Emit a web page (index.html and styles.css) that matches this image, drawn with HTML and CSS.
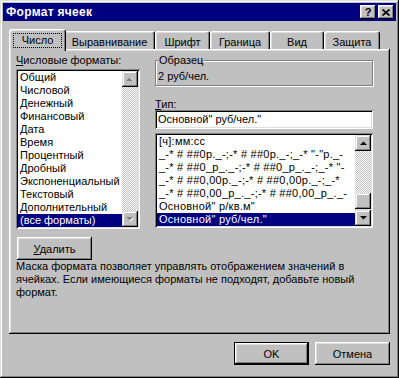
FILE: index.html
```html
<!DOCTYPE html>
<html lang="ru">
<head>
    <meta charset="UTF-8">
    <title>Формат ячеек</title>
    <link rel="stylesheet" href="styles.css">
</head>
<body>

    <div class="window">
        <div class="caption">
            <span class="caption-title">Формат ячеек</span>
            <div class="caption-btns">
                <span class="cap-btn help">?</span>
                <span class="cap-btn close">
                    <svg width="8" height="7" viewBox="0 0 8 7"><path d="M0.5 0.5 L7.5 6.5 M7.5 0.5 L0.5 6.5" stroke="#000" stroke-width="1.6"/></svg>
                </span>
            </div>
        </div>

        <div class="dialog">
            <div class="tabs">
                <div class="tab active w-num"><span class="focus">Число</span></div>
                <div class="tab w-align">Выравнивание</div>
                <div class="tab w-font">Шрифт</div>
                <div class="tab w-border">Граница</div>
                <div class="tab w-view">Вид</div>
                <div class="tab w-prot">Защита</div>
            </div>

            <div class="panel">
                <div class="cols">
                    <div class="col-left">
                        <div class="label"><u>Ч</u>исловые форматы:</div>
                        <div class="listbox cats">
                            <ul class="items">
                                <li>Общий</li>
                                <li>Числовой</li>
                                <li>Денежный</li>
                                <li>Финансовый</li>
                                <li>Дата</li>
                                <li>Время</li>
                                <li>Процентный</li>
                                <li>Дробный</li>
                                <li>Экспоненциальный</li>
                                <li>Текстовый</li>
                                <li>Дополнительный</li>
                                <li class="selected">(все форматы)</li>
                            </ul>
                            <div class="scrollbar">
                                <span class="sb-btn">
                                    <svg width="8" height="5" viewBox="0 0 8 5"><polygon points="1,4 8,4 4.5,0.5" fill="#fff"/><polygon points="0,4 7,4 3.5,0.5" fill="#808080"/></svg>
                                </span>
                                <span class="sb-track"></span>
                                <span class="sb-btn">
                                    <svg width="8" height="5" viewBox="0 0 8 5"><polygon points="1,1 8,1 4.5,4.5" fill="#fff"/><polygon points="0,0 7,0 3.5,3.5" fill="#808080"/></svg>
                                </span>
                            </div>
                        </div>
                        <button class="btn btn-delete"><u>У</u>далить</button>
                    </div>

                    <div class="col-right">
                        <fieldset class="group">
                            <legend>Образец</legend>
                            <div class="sample">2 руб/чел.</div>
                        </fieldset>
                        <div class="label label-type"><u>Т</u>ип:</div>
                        <div class="field">Основной" руб/чел."</div>
                        <div class="listbox formats">
                            <ul class="items">
                                <li>[ч]:мм:сс</li>
                                <li>_-* # ##0р._-;-* # ##0р._-;_-* "-"р._-</li>
                                <li>_-* # ##0_р_._-;-* # ##0_р_._-;_-* "-</li>
                                <li>_-* # ##0,00р._-;-* # ##0,00р._-;_-*</li>
                                <li>_-* # ##0,00_р_._-;-* # ##0,00_р_._-</li>
                                <li>Основной" р/кв.м"</li>
                                <li class="selected">Основной" руб/чел."</li>
                            </ul>
                            <div class="scrollbar">
                                <span class="sb-btn">
                                    <svg width="7" height="4" viewBox="0 0 7 4"><polygon points="0,4 7,4 3.5,0.5" fill="#000"/></svg>
                                </span>
                                <span class="sb-track">
                                    <span class="sb-thumb"></span>
                                </span>
                                <span class="sb-btn">
                                    <svg width="7" height="4" viewBox="0 0 7 4"><polygon points="0,0 7,0 3.5,3.5" fill="#000"/></svg>
                                </span>
                            </div>
                        </div>
                    </div>
                </div>

                <p class="hint">Маска формата позволяет управлять отображением значений в<br>ячейках. Если имеющиеся форматы не подходят, добавьте новый<br>формат.</p>
            </div>

            <div class="actions">
                <button class="btn btn-default">OK</button>
                <button class="btn">Отмена</button>
            </div>
        </div>
    </div>

</body>
</html>
```

FILE: styles.css
```css
* {
    box-sizing: border-box;
}

body {
    margin: 0;
    background: #c0c0c0;
    font-family: "Liberation Sans", Arial, sans-serif;
    font-size: 11px;
    color: #000;
}

/* window frame */
.window {
    width: 399px;
    height: 378px;
    padding: 3px;
    display: flex;
    flex-direction: column;
    background: #c0c0c0;
    box-shadow: inset -1px -1px #000, inset 1px 1px #dfdfdf,
                inset -2px -2px #808080, inset 2px 2px #fff;
}

.caption {
    height: 18px;
    display: flex;
    align-items: center;
    justify-content: space-between;
    padding: 0 2px 0 3px;
    background: #000080;
    color: #fff;
    font-weight: bold;
}

.caption-title {
    font-size: 12px;
    letter-spacing: 0.3px;
}

.caption-btns {
    display: flex;
    gap: 2px;
}

.cap-btn {
    width: 16px;
    height: 14px;
    display: flex;
    align-items: center;
    justify-content: center;
    background: #c0c0c0;
    color: #000;
    font-size: 11px;
    font-weight: bold;
    box-shadow: inset -1px -1px #000, inset 1px 1px #fff,
                inset -2px -2px #808080, inset 2px 2px #dfdfdf;
}

.dialog {
    flex: 1;
    display: flex;
    flex-direction: column;
    padding: 8px 6px 0;
}

/* tabs */
.tabs {
    height: 20px;
    display: flex;
    align-items: flex-end;
    padding-left: 2px;
    position: relative;
    z-index: 1;
}

.tab {
    height: 18px;
    padding-top: 3px;
    line-height: 14px;
    text-align: center;
    border: 1px solid;
    border-color: #fff #000 transparent #fff;
    border-bottom: none;
    border-radius: 3px 3px 0 0;
    box-shadow: inset -1px 0 #808080, inset 1px 1px #dfdfdf;
    background: #c0c0c0;
}

.w-num { width: 53px; }
.w-align { width: 91px; }
.w-font { width: 55px; }
.w-border { width: 60px; }
.w-view { width: 54px; }
.w-prot { width: 56px; }

.tab.active {
    width: 57px;
    height: 22px;
    margin: 0 -2px -2px;
    padding: 3px 3px 0;
    position: relative;
    z-index: 2;
}

.tab.active .focus {
    display: block;
    height: 15px;
    line-height: 13px;
    border: 1px dotted #000;
}

/* tab page */
.panel {
    height: 285px;
    padding: 5px 7px;
    box-shadow: inset -1px -1px #000, inset 1px 1px #fff,
                inset -2px -2px #808080, inset 2px 2px #dfdfdf;
}

.cols {
    display: flex;
    gap: 15px;
}

.col-left {
    width: 124px;
    display: flex;
    flex-direction: column;
}

.col-right {
    width: 218px;
    display: flex;
    flex-direction: column;
}

.label {
    height: 13px;
    line-height: 13px;
    margin-bottom: 2px;
}

.label-type {
    height: 12px;
    line-height: 12px;
    margin: 12px 0 0;
}

/* list boxes */
.listbox {
    display: flex;
    padding: 2px;
    background: #fff;
    box-shadow: inset 1px 1px #808080, inset -1px -1px #fff,
                inset 2px 2px #000, inset -2px -2px #dfdfdf;
}

.cats {
    height: 160px;
}

.formats {
    height: 95px;
    margin-top: 4px;
}

.items {
    flex: 1;
    min-width: 0;
    margin: 0;
    padding: 0;
    list-style: none;
    overflow: hidden;
}

.items li {
    height: 13px;
    line-height: 13px;
    padding-left: 2px;
    white-space: nowrap;
    overflow: hidden;
}

.formats .items li {
    letter-spacing: 0.25px;
}

.items li.selected {
    background: #000080;
    color: #fff;
}

.scrollbar {
    width: 16px;
    display: flex;
    flex-direction: column;
}

.sb-btn {
    height: 16px;
    display: flex;
    align-items: center;
    justify-content: center;
    background: #c0c0c0;
    box-shadow: inset -1px -1px #000, inset 1px 1px #dfdfdf,
                inset -2px -2px #808080, inset 2px 2px #fff;
}

.sb-track {
    flex: 1;
    display: flex;
    flex-direction: column;
    background-image: repeating-conic-gradient(#fff 0 25%, #c0c0c0 0 50%);
    background-size: 2px 2px;
}

.sb-thumb {
    height: 16px;
    margin-top: auto;
    margin-bottom: 1px;
    background: #c0c0c0;
    box-shadow: inset -1px -1px #000, inset 1px 1px #dfdfdf,
                inset -2px -2px #808080, inset 2px 2px #fff;
}

/* buttons */
.btn {
    width: 75px;
    height: 23px;
    padding: 0;
    border: none;
    background: #c0c0c0;
    font-family: inherit;
    font-size: 11px;
    color: #000;
    box-shadow: inset -1px -1px #000, inset 1px 1px #fff,
                inset -2px -2px #808080, inset 2px 2px #dfdfdf;
}

.btn-delete {
    margin: 8px 0 0 1px;
}

.btn-default {
    border: 1px solid #000;
}

/* sample group */
.group {
    margin: 0;
    padding: 3px 2px 2px;
    border: 1px solid #808080;
    box-shadow: inset 1px 1px #fff, 1px 1px #fff;
}

.group legend {
    padding: 0 1px;
    line-height: 13px;
    background: #c0c0c0;
}

.sample {
    line-height: 13px;
}

.field {
    height: 19px;
    padding: 2px 3px;
    line-height: 15px;
    background: #fff;
    box-shadow: inset 1px 1px #808080, inset -1px -1px #fff,
                inset 2px 2px #000, inset -2px -2px #dfdfdf;
}

.hint {
    margin: 0;
    line-height: 13px;
}

.actions {
    display: flex;
    justify-content: flex-end;
    gap: 6px;
    margin-top: 8px;
}
```
